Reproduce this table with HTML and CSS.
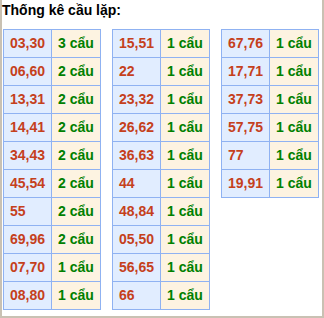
FILE: index.html
```html
<!DOCTYPE html>
<html>
<head>
<meta charset="utf-8">
<link rel="stylesheet" href="styles.css">
</head>
<body>
<div class="box">
  <div class="title">Thống kê cầu lặp:</div>
  <div class="tables">
    <div class="tbl">
      <div class="n">03,30</div><div class="c">3 cẩu</div>
      <div class="n">06,60</div><div class="c">2 cẩu</div>
      <div class="n">13,31</div><div class="c">2 cẩu</div>
      <div class="n">14,41</div><div class="c">2 cẩu</div>
      <div class="n">34,43</div><div class="c">2 cẩu</div>
      <div class="n">45,54</div><div class="c">2 cẩu</div>
      <div class="n">55</div><div class="c">2 cẩu</div>
      <div class="n">69,96</div><div class="c">2 cẩu</div>
      <div class="n">07,70</div><div class="c">1 cẩu</div>
      <div class="n">08,80</div><div class="c">1 cẩu</div>
    </div>
    <div class="tbl">
      <div class="n">15,51</div><div class="c">1 cẩu</div>
      <div class="n">22</div><div class="c">1 cẩu</div>
      <div class="n">23,32</div><div class="c">1 cẩu</div>
      <div class="n">26,62</div><div class="c">1 cẩu</div>
      <div class="n">36,63</div><div class="c">1 cẩu</div>
      <div class="n">44</div><div class="c">1 cẩu</div>
      <div class="n">48,84</div><div class="c">1 cẩu</div>
      <div class="n">05,50</div><div class="c">1 cẩu</div>
      <div class="n">56,65</div><div class="c">1 cẩu</div>
      <div class="n">66</div><div class="c">1 cẩu</div>
    </div>
    <div class="tbl">
      <div class="n">67,76</div><div class="c">1 cẩu</div>
      <div class="n">17,71</div><div class="c">1 cẩu</div>
      <div class="n">37,73</div><div class="c">1 cẩu</div>
      <div class="n">57,75</div><div class="c">1 cẩu</div>
      <div class="n">77</div><div class="c">1 cẩu</div>
      <div class="n">19,91</div><div class="c">1 cẩu</div>
    </div>
  </div>
</div>
</body>
</html>
```
FILE: styles.css
```css
html, body {
  margin: 0;
  padding: 0;
  background: #ffffff;
}
.box {
  box-sizing: border-box;
  width: 324px;
  height: 318px;
  border: 2px solid #c9c1b3;
  border-top: none;
  font-family: "Liberation Sans", Arial, sans-serif;
  font-weight: bold;
  font-size: 14px;
}
.title {
  color: #000;
  line-height: 20px;
  height: 20px;
  margin-bottom: 9px;
}
.tables {
  display: flex;
  align-items: flex-start;
  gap: 11px;
  padding-left: 1px;
}
.tbl {
  display: grid;
  grid-template-columns: 47px 48px;
  grid-auto-rows: 27px;
  gap: 1px;
  padding: 1px;
  background: #8fb2f2;
}
.n, .c {
  line-height: 27px;
  padding-left: 6px;
  white-space: nowrap;
}
.n {
  background: #e1edff;
  color: #c5401c;
}
.c {
  background: #fdf3e1;
  color: #008000;
}
```
